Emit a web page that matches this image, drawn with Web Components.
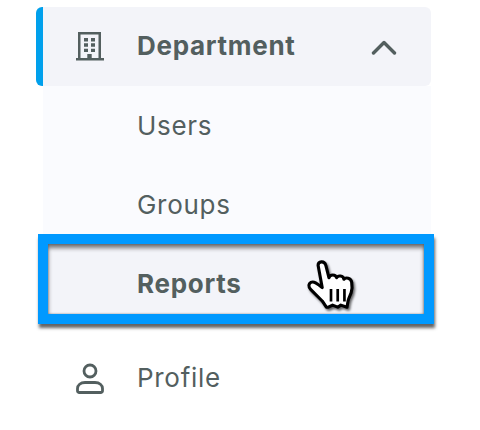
<!DOCTYPE html>
<html>
<head>
<meta charset="utf-8">
<style>
  html, body { margin: 0; background: #fff; }
  body { width: 480px; height: 430px; overflow: hidden; font-family: "Inter", "Liberation Sans", sans-serif; color: #535f5f; }
</style>
</head>
<body>
<side-menu>
  <menu-group label="Department">
    <svg slot="icon" width="28" height="32" viewBox="0 0 28 32" fill="#535f5f">
      <path fill-rule="evenodd" d="M2 1h23v26h3v2.500H0V27h2zM4.500 3.500V27h6.800v-4h4.400v4h6.800V3.500z"/>
      <path d="M8 7h4v3.500H8zM15 7h4v3.500h-4zM8 12.300h4v3.400H8zM15 12.300h4v3.400h-4zM8 17.700h4v3.300H8zM15 17.700h4v3.300h-4z"/>
    </svg>
    <sub-item>Users</sub-item>
    <sub-item>Groups</sub-item>
    <sub-item active>Reports</sub-item>
  </menu-group>
  <menu-link>
    <svg slot="icon" width="28" height="32" viewBox="0 0 28 32" fill="none" stroke="#535f5f" stroke-width="2.800">
      <circle cx="14" cy="8" r="6"/>
      <path d="M9 19.500h10c4.500 0 7.500 2.700 7.500 6v2.600a1.400 1.400 0 0 1-1.400 1.400H2.900a1.400 1.400 0 0 1-1.400-1.400v-2.600c0-3.300 3-6 7.500-6z"/>
    </svg>
    Profile
  </menu-link>
</side-menu>

<script>
class SideMenu extends HTMLElement {
  constructor() {
    super();
    this.attachShadow({ mode: 'open' });
    this.shadowRoot.innerHTML = `
      <style>
        :host { display: flex; flex-direction: column; gap: 16px; width: 395px; margin: 7px 0 0 36px; }
      </style>
      <slot></slot>`;
  }
}

class MenuGroup extends HTMLElement {
  constructor() {
    super();
    this.attachShadow({ mode: 'open' });
    this.shadowRoot.innerHTML = `
      <style>
        :host { display: block; }
        .head {
          display: flex; align-items: center; height: 79px; box-sizing: border-box;
          background: #f3f4f9; border-left: 7px solid #00a0ec; border-radius: 6px;
          padding: 0 33px 0 33px;
        }
        .icon { display: flex; width: 28px; margin-right: 33px; }
        .label { flex: 1; font-size: 26px; font-weight: 700; letter-spacing: .7px; padding-bottom: 2px; }
        .sub { margin-left: 7px; background: #fafbfe; }
      </style>
      <div class="head">
        <span class="icon"><slot name="icon"></slot></span>
        <span class="label">${this.getAttribute('label')}</span>
        <svg width="28" height="16" viewBox="0 0 28 16"><path d="M3.500 14 14 3.500 24.500 14" fill="none" stroke="#535f5f" stroke-width="3.400" stroke-linecap="round" stroke-linejoin="round"/></svg>
      </div>
      <div class="sub"><slot></slot></div>`;
  }
}

class SubItem extends HTMLElement {
  constructor() {
    super();
    this.attachShadow({ mode: 'open' });
    this.shadowRoot.innerHTML = `
      <style>
        :host { display: flex; align-items: center; position: relative; box-sizing: border-box; height: 79px; padding: 0 0 0 94px; font-size: 26px; letter-spacing: .7px; }
        :host([active]) { background: #f3f4f9; font-weight: 700; }
        .box, .hand { display: none; }
        :host([active]) .box {
          display: block; position: absolute; left: -5px; top: -10px; width: 396px; height: 90px; box-sizing: border-box;
          border: 10px solid #0099ff;
          box-shadow: 1px 4px 3px rgba(50,50,50,.75), inset 0 4px 4px rgba(50,50,50,.65), inset 0 0 2px rgba(50,50,50,.6);
        }
        :host([active]) .hand { display: block; position: absolute; left: 257px; top: 11px; }
      </style>
      <slot></slot>
      <div class="box"></div>
      <svg class="hand" width="62" height="62" viewBox="0 0 60 60">
        <defs><filter id="s" x="-20%" y="-20%" width="150%" height="150%"><feDropShadow dx="1.500" dy="2" stdDeviation="1.200" flood-color="#000" flood-opacity=".6"/></filter></defs>
        <path filter="url(#s)" fill="#fff" stroke="#000" stroke-width="3" stroke-linejoin="round" d="M17.500 10c0-4 6-5 7.500 0l3 12c1-3.500 6.500-3.500 7.500 0 1-2.500 6.500-2.500 7 1.500 1.500-2 7-1.500 7.500 3 .7 4 .5 7-.5 10-1 3-2.500 5-3 8l-1 6-6-2-3 2-5-2-4 2h-2l-4-6-11-11c-3-3-2-6 0-7 3-1.500 6 1 11 5z"/>
        <path d="M30 33v12M36.500 33v12M43 33v12" stroke="#000" stroke-width="2.600" fill="none"/>
      </svg>`;
  }
}

class MenuLink extends HTMLElement {
  constructor() {
    super();
    this.attachShadow({ mode: 'open' });
    this.shadowRoot.innerHTML = `
      <style>
        :host { display: flex; align-items: center; box-sizing: border-box; height: 79px; padding: 0 0 2px 40px; font-size: 26px; letter-spacing: .7px; }
        .icon { display: flex; width: 28px; margin-right: 33px; padding-top: 2px; }
      </style>
      <span class="icon"><slot name="icon"></slot></span>
      <slot></slot>`;
  }
}

customElements.define('side-menu', SideMenu);
customElements.define('menu-group', MenuGroup);
customElements.define('sub-item', SubItem);
customElements.define('menu-link', MenuLink);
</script>
</body>
</html>
